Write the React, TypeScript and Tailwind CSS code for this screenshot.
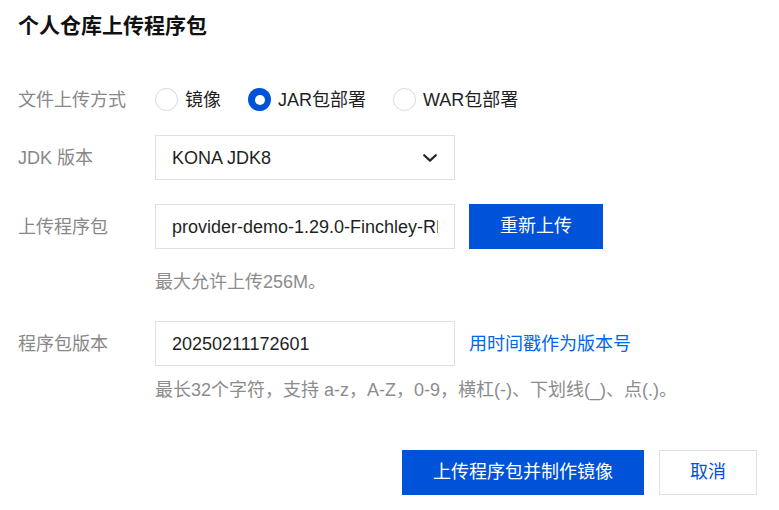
const FONT = "font-['Liberation_Sans','Noto_Sans_CJK_SC',sans-serif]";

function Radio({ label, checked }: { label: string; checked?: boolean }) {
  return (
    <label className="flex items-center gap-[7px] cursor-pointer">
      {checked ? (
        <span className="flex h-[23px] w-[23px] items-center justify-center rounded-full bg-[#0052d9]">
          <span className="h-[10px] w-[10px] rounded-full bg-white" />
        </span>
      ) : (
        <span className="h-[23px] w-[23px] rounded-full border border-[#d5d9e2] bg-white" />
      )}
      <span className="text-[18px] leading-[24px] text-[#1f1f1f]">{label}</span>
    </label>
  );
}

function FormRow({ label, children, className = "" }: { label: string; children: React.ReactNode; className?: string }) {
  return (
    <div className={`flex items-center ${className}`}>
      <div className="w-[137px] shrink-0 text-[18px] leading-[24px] text-[#888888]">{label}</div>
      {children}
    </div>
  );
}

export default function App() {
  return (
    <div className={`h-[510px] w-[779px] bg-white pl-[18px] pr-[22px] pt-[11px] ${FONT}`}>
      <h1 className="text-[21px] font-bold leading-[30px] text-[#111111]">个人仓库上传程序包</h1>

      <FormRow label="文件上传方式" className="mt-[47px] h-[23px]">
        <div className="flex items-center gap-[27px]">
          <Radio label="镜像" />
          <Radio label="JAR包部署" checked />
          <Radio label="WAR包部署" />
        </div>
      </FormRow>

      <FormRow label="JDK 版本" className="mt-[24px] h-[45px]">
        <div className="flex h-[45px] w-[300px] items-center justify-between border border-[#dfe1e8] pl-[16px] pr-[17px]">
          <span className="text-[18px] leading-[24px] text-[#1f1f1f]">KONA JDK8</span>
          <svg width="14" height="8" viewBox="0 0 14 8" fill="none">
            <path d="M1.2 1.2L7 6.6l5.8-5.4" stroke="#262626" strokeWidth="2.2" strokeLinecap="round" strokeLinejoin="round" />
          </svg>
        </div>
      </FormRow>

      <FormRow label="上传程序包" className="mt-[24px] h-[45px]">
        <div className="flex h-[45px] w-[300px] items-center border border-[#dfe1e8] px-[16px]">
          <span className="block overflow-hidden whitespace-nowrap text-[18px] leading-[24px] text-[#1f1f1f]">
            provider-demo-1.29.0-Finchley-RELEASE.jar
          </span>
        </div>
        <button
          type="button"
          className="ml-[14px] h-[45px] w-[134px] bg-[#0052d9] text-[18px] text-white"
        >
          重新上传
        </button>
      </FormRow>

      <p className="ml-[137px] mt-[21px] text-[18px] leading-[24px] text-[#8c8c8c]">最大允许上传256M。</p>

      <FormRow label="程序包版本" className="mt-[27px] h-[45px]">
        <div className="flex h-[45px] w-[300px] items-center border border-[#dfe1e8] px-[16px]">
          <span className="text-[18px] leading-[24px] text-[#1f1f1f]">20250211172601</span>
        </div>
        <a className="ml-[14px] cursor-pointer text-[18px] leading-[24px] text-[#0066ee]">用时间戳作为版本号</a>
      </FormRow>

      <p className="ml-[137px] mt-[12px] text-[18px] leading-[24px] text-[#8c8c8c]">
        最长32个字符，支持 a-z，A-Z，0-9，横杠(-)、下划线(_)、点(.)。
      </p>

      <div className="mt-[48px] flex justify-end gap-[15px]">
        <button type="button" className="h-[45px] w-[242px] bg-[#0052d9] text-[18px] text-white">
          上传程序包并制作镜像
        </button>
        <button
          type="button"
          className="h-[45px] w-[98px] border border-[#dfe1e8] bg-white text-[18px] text-[#0052d9]"
        >
          取消
        </button>
      </div>
    </div>
  );
}
